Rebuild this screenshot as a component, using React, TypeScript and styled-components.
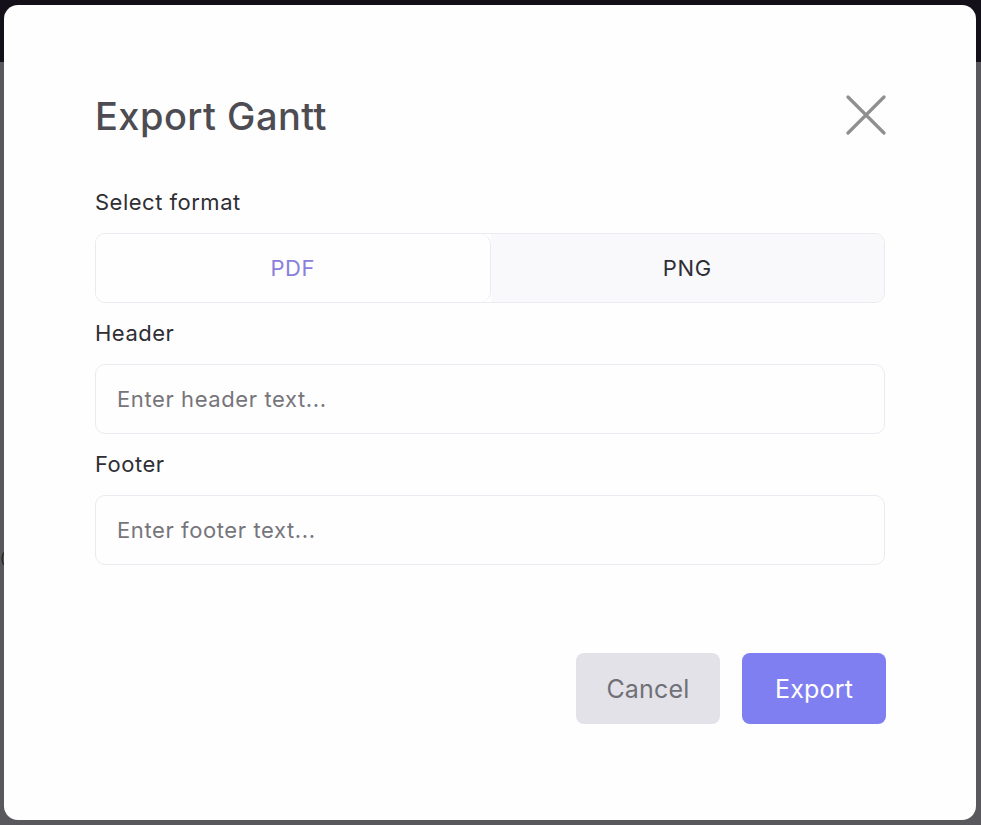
import styled, { createGlobalStyle } from 'styled-components';

const GlobalStyle = createGlobalStyle`
  html, body {
    margin: 0;
    padding: 0;
    height: 100%;
    overflow: hidden;
  }
  body {
    font-family: Inter, "Noto Sans", sans-serif;
    background: #59585c;
  }
`;

const Page = styled.div`
  width: 981px;
  height: 825px;
  display: flex;
  flex-direction: column;
`;

const TopBar = styled.div`
  height: 62px;
  background: #141019;
`;

const PageBody = styled.div`
  flex: 1;
  background: #59585c;
  padding-top: 488px;
`;

const StrayText = styled.span`
  display: block;
  font-size: 14px;
  line-height: 16px;
  color: #1e1d22;
`;

const Overlay = styled.div`
  position: fixed;
  inset: 0;
  display: flex;
  align-items: flex-start;
  justify-content: flex-start;
  padding: 5px 0 0 4px;
`;

const Modal = styled.div`
  width: 972px;
  height: 815px;
  box-sizing: border-box;
  background: #fefefe;
  border-radius: 14px;
  padding: 90px 91px 0;
  display: flex;
  flex-direction: column;
`;

const TitleRow = styled.div`
  display: flex;
  align-items: center;
  justify-content: space-between;
  margin-bottom: 49px;
`;

const Title = styled.h2`
  margin: 0;
  font-size: 38px;
  line-height: 43px;
  font-weight: 500;
  color: #4d4c52;
  letter-spacing: 0.45px;
`;

const CloseButton = styled.button`
  border: none;
  background: none;
  padding: 0;
  width: 40px;
  height: 40px;
  display: flex;
  align-items: center;
  justify-content: center;
  cursor: pointer;
  margin-right: -1px;
  margin-top: -4px;
`;

const Form = styled.div`
  display: flex;
  flex-direction: column;
  gap: 15px;
`;

const Label = styled.div`
  font-size: 22px;
  line-height: 31px;
  letter-spacing: 0.5px;
  color: #2f2e33;
`;

const Segmented = styled.div`
  display: flex;
  height: 70px;
  border: 1px solid #ebeaf0;
  border-radius: 10px;
  overflow: hidden;
  box-sizing: border-box;
`;

const Segment = styled.button<{ $active?: boolean }>`
  flex: 1;
  border: none;
  font-family: inherit;
  font-size: 22px;
  letter-spacing: 0.6px;
  background: ${p => (p.$active ? '#fefefe' : '#f9f9fc')};
  color: ${p => (p.$active ? '#8a7fdc' : '#2f2e33')};
  border-right: ${p => (p.$active ? '1px solid #ebeaf0' : 'none')};
  border-radius: ${p => (p.$active ? '0 10px 10px 0' : '0')};
  cursor: pointer;
`;

const Input = styled.input`
  height: 70px;
  box-sizing: border-box;
  border: 1px solid #ebeaf0;
  border-radius: 10px;
  padding: 0 21px;
  font-family: inherit;
  font-size: 22px;
  letter-spacing: 0.6px;
  color: #2f2e33;
  background: #fefefe;
  outline: none;

  &::placeholder {
    color: #76757b;
  }
`;

const Footer = styled.div`
  display: flex;
  justify-content: flex-end;
  gap: 22px;
  margin-top: 88px;
  margin-right: -1px;
`;

const Button = styled.button<{ $primary?: boolean }>`
  width: 144px;
  height: 71px;
  border: none;
  border-radius: 8px;
  font-family: inherit;
  font-size: 25px;
  letter-spacing: 0.2px;
  background: ${p => (p.$primary ? '#7f7ff2' : '#e3e2e9')};
  color: ${p => (p.$primary ? '#ffffff' : '#717077')};
  cursor: pointer;
`;

function CloseIcon() {
  return (
    <svg width="40" height="40" viewBox="0 0 40 40" fill="none">
      <path d="M2 2L38 38M38 2L2 38" stroke="#8f8f8f" strokeWidth="3.2" strokeLinecap="round" />
    </svg>
  );
}

export default function App() {
  return (
    <>
      <GlobalStyle />
      <Page>
        <TopBar />
        <PageBody>
          <StrayText>(</StrayText>
        </PageBody>
      </Page>
      <Overlay>
        <Modal>
          <TitleRow>
            <Title>Export Gantt</Title>
            <CloseButton aria-label="Close">
              <CloseIcon />
            </CloseButton>
          </TitleRow>
          <Form>
            <Label>Select format</Label>
            <Segmented>
              <Segment $active>PDF</Segment>
              <Segment>PNG</Segment>
            </Segmented>
            <Label>Header</Label>
            <Input placeholder="Enter header text..." />
            <Label>Footer</Label>
            <Input placeholder="Enter footer text..." />
          </Form>
          <Footer>
            <Button>Cancel</Button>
            <Button $primary>Export</Button>
          </Footer>
        </Modal>
      </Overlay>
    </>
  );
}
